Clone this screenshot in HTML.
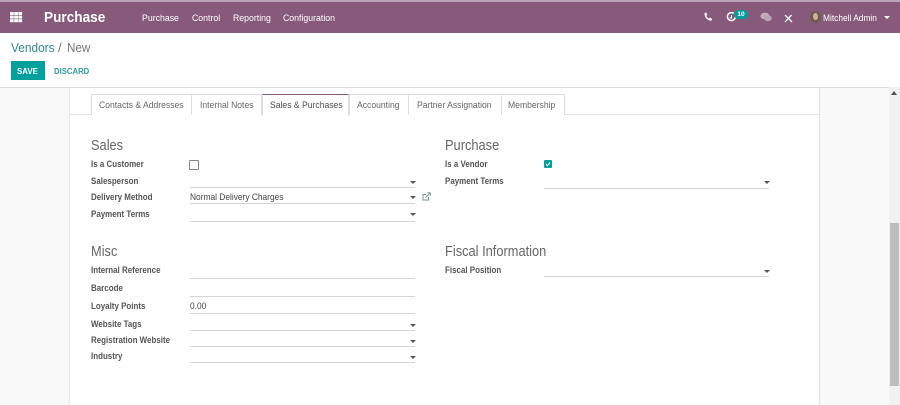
<!DOCTYPE html>
<html><head><meta charset="utf-8"><style>
html,body{margin:0;padding:0;width:900px;height:405px;overflow:hidden;background:#fff}
body{font-family:"Liberation Sans",sans-serif;position:relative;color:#4c4c4c}
#w{position:absolute;left:0;top:0;width:900px;height:405px;overflow:hidden;filter:blur(.3px)}
.a,.t,.l,.h,.u,.c{position:absolute;white-space:nowrap}
.t{font-size:9.5px;line-height:14px;color:#666;top:99px;transform:scaleX(.905);transform-origin:0 0}
.l{font-size:9px;font-weight:bold;color:#555;line-height:12px;transform:scaleX(.885);transform-origin:0 0}
.h{font-size:14.5px;color:#666;line-height:18px;transform:scaleX(.885);transform-origin:0 0;margin-top:1px}
.v{transform:scaleX(.9);transform-origin:0 0}
.u{height:1px;background:#d4d4d4}
.c{width:0;height:0;border-left:3px solid transparent;border-right:3px solid transparent;border-top:3px solid #555}
.n{position:absolute;top:12px;font-size:9.3px;line-height:13px;color:#fff;white-space:nowrap;transform:scaleX(.94);transform-origin:0 0}
.tab{position:absolute;top:94px;height:21px;border:1px solid #ddd;border-bottom:none;box-sizing:border-box;background:#fff}
</style></head><body><div id="w">
<div class="a" style="left:0;top:0;width:900px;height:2px;background:#b9a6b5"></div>
<div class="a" style="left:0;top:2px;width:900px;height:31px;background:#875a7b"></div>
<svg class="a" style="left:10px;top:12px" width="13" height="11"><g fill="#fff"><rect x="0" y="0" width="3.7" height="3"/><rect x="4.2" y="0" width="3.7" height="3"/><rect x="8.4" y="0" width="3.7" height="3"/><rect x="0" y="3.6" width="3.7" height="3"/><rect x="4.2" y="3.6" width="3.7" height="3"/><rect x="8.4" y="3.6" width="3.7" height="3"/><rect x="0" y="7.2" width="3.7" height="3"/><rect x="4.2" y="7.2" width="3.7" height="3"/><rect x="8.4" y="7.2" width="3.7" height="3"/></g></svg>
<div class="a" style="left:44px;top:9px;font-size:14.8px;line-height:18px;font-weight:bold;color:#fff;transform:scaleX(.92);transform-origin:0 0">Purchase</div>
<div class="n" style="left:142px">Purchase</div>
<div class="n" style="left:192px">Control</div>
<div class="n" style="left:233px">Reporting</div>
<div class="n" style="left:283px">Configuration</div>
<svg class="a" style="left:703px;top:12px" width="10" height="10" viewBox="0 0 10 10"><path d="M1.5 1 L3.3 .6 L4.3 2.9 L3.2 3.9 C3.7 5 4.6 6 5.8 6.6 L7 5.6 L9 6.7 L8.6 8.6 C4.8 9 1.2 5.3 1.5 1Z" fill="#fff"/></svg>
<svg class="a" style="left:726px;top:12px" width="11" height="11" viewBox="0 0 11 11"><path d="M7.8 1.4 A4 4 0 1 0 9.4 4.4" fill="none" stroke="#fff" stroke-width="1.5"/><path d="M5.5 3 V6 H3.6" fill="none" stroke="#fff" stroke-width="1"/></svg>
<div class="a" style="left:734px;top:10px;width:14px;height:9px;border-radius:5px;background:#00a09d;color:#fff;font-size:6.5px;font-weight:bold;line-height:9px;text-align:center">10</div>
<svg class="a" style="left:760px;top:12px" width="13" height="11" viewBox="0 0 13 11"><ellipse cx="5" cy="4" rx="4.6" ry="3.4" fill="#c3adbd"/><ellipse cx="8" cy="6.2" rx="3.8" ry="3" fill="#b9a3b4"/></svg>
<svg class="a" style="left:784px;top:14px" width="9" height="9" viewBox="0 0 9 9"><path d="M1 1 L8 8 M7.5 1 L1 8" stroke="#fff" stroke-width="1.3" fill="none"/></svg>
<div class="a" style="left:810px;top:11px;width:11px;height:12px;border-radius:50%;background:#6f5b4e"></div>
<div class="a" style="left:813px;top:13px;width:5px;height:7px;border-radius:50%;background:#d0b09a"></div>
<div class="n" style="left:823px;transform:scaleX(.9)">Mitchell Admin</div>
<div class="c" style="left:884px;top:16px;border-top-color:#fff"></div>

<div class="a" style="left:11px;top:40px;font-size:13.2px;line-height:16px;color:#2f8a8b;transform:scaleX(.9);transform-origin:0 0">Vendors</div>
<div class="a" style="left:58px;top:40px;font-size:13.2px;line-height:16px;color:#777">/</div>
<div class="a" style="left:67px;top:40px;font-size:13.2px;line-height:16px;color:#777;transform:scaleX(.88);transform-origin:0 0">New</div>
<div class="a" style="left:11px;top:61px;width:34px;height:19px;background:#00a09d"></div>
<div class="a" style="left:17px;top:65px;font-size:8.6px;font-weight:bold;line-height:12px;color:#fff;transform:scaleX(.92);transform-origin:0 0">SAVE</div>
<div class="a" style="left:54px;top:65px;font-size:8.6px;font-weight:bold;line-height:12px;color:#2f9c9d;transform:scaleX(.9);transform-origin:0 0">DISCARD</div>

<div class="a" style="left:0;top:87px;width:900px;height:318px;background:#f9f9f9"></div>
<div class="a" style="left:0;top:87px;width:890px;height:1px;background:#dcdcdc"></div>
<div class="a" style="left:69px;top:88px;width:749px;height:317px;background:#fff;border-left:1px solid #e8e8e8;border-right:1px solid #e2e2e2"></div>
<div class="a" style="left:70px;top:114px;width:749px;height:1px;background:#e0e0e0"></div>

<div class="tab" style="left:91px;width:101px"></div>
<div class="tab" style="left:191px;width:71px"></div>
<div class="tab" style="left:349px;width:60px"></div>
<div class="tab" style="left:408px;width:94px"></div>
<div class="tab" style="left:501px;width:64px"></div>
<div class="tab" style="left:262px;width:87px;height:22px;border-color:#ddd;border-top-color:#875a7b"></div>
<div class="t" style="left:99px">Contacts &amp; Addresses</div>
<div class="t" style="left:200px">Internal Notes</div>
<div class="t" style="left:270px;color:#4c4c4c">Sales &amp; Purchases</div>
<div class="t" style="left:357px">Accounting</div>
<div class="t" style="left:417px">Partner Assignation</div>
<div class="t" style="left:508px">Membership</div>

<div class="h" style="left:90.5px;top:136px">Sales</div>
<div class="h" style="left:444.5px;top:136px">Purchase</div>
<div class="h" style="left:90.5px;top:242px">Misc</div>
<div class="h" style="left:444.5px;top:242px">Fiscal Information</div>

<div class="l" style="left:90.5px;top:158px">Is a Customer</div>
<div class="a" style="left:189px;top:160px;width:8px;height:8px;border:1px solid #888;border-radius:1px;background:#fff"></div>
<div class="l" style="left:90.5px;top:175px">Salesperson</div>
<div class="u" style="left:190px;top:187px;width:225px"></div><div class="c" style="left:410px;top:181px"></div>
<div class="l" style="left:90.5px;top:191px">Delivery Method</div>
<div class="a v" style="left:189.5px;top:191px;font-size:9.3px;line-height:13px;color:#444">Normal Delivery Charges</div>
<div class="u" style="left:190px;top:203px;width:225px"></div><div class="c" style="left:410px;top:196px"></div>
<svg class="a" style="left:422px;top:192px" width="9" height="9" viewBox="0 0 9 9"><path d="M6.5 5 V8 H1 V2.5 H4" fill="none" stroke="#6f8f90" stroke-width=".9"/><path d="M3.5 5.5 L8 1 M5.3 .8 H8.2 V3.7" fill="none" stroke="#6f8f90" stroke-width=".9"/></svg>
<div class="l" style="left:90.5px;top:208px">Payment Terms</div>
<div class="u" style="left:190px;top:221px;width:225px"></div><div class="c" style="left:410px;top:213px"></div>

<div class="l" style="left:444.5px;top:158px">Is a Vendor</div>
<div class="a" style="left:544px;top:160px;width:8px;height:8px;background:#00a09d;border-radius:1px"></div>
<svg class="a" style="left:544px;top:160px" width="8" height="8" viewBox="0 0 8 8"><path d="M2 4.2 L3.4 5.6 L6 2.6" fill="none" stroke="#fff" stroke-width="1.1"/></svg>
<div class="l" style="left:444.5px;top:175px">Payment Terms</div>
<div class="u" style="left:544px;top:188px;width:225px"></div><div class="c" style="left:764px;top:181px"></div>

<div class="l" style="left:90.5px;top:264px">Internal Reference</div>
<div class="u" style="left:190px;top:278px;width:225px"></div>
<div class="l" style="left:90.5px;top:282px">Barcode</div>
<div class="u" style="left:190px;top:296px;width:225px"></div>
<div class="l" style="left:90.5px;top:300px">Loyalty Points</div>
<div class="a v" style="left:189.5px;top:300px;font-size:9.3px;line-height:13px;color:#444">0.00</div>
<div class="u" style="left:190px;top:313px;width:225px"></div>
<div class="l" style="left:90.5px;top:318px">Website Tags</div>
<div class="u" style="left:190px;top:330px;width:225px"></div><div class="c" style="left:410px;top:324px"></div>
<div class="l" style="left:90.5px;top:334px">Registration Website</div>
<div class="u" style="left:190px;top:346px;width:225px"></div><div class="c" style="left:410px;top:340px"></div>
<div class="l" style="left:90.5px;top:350px">Industry</div>
<div class="u" style="left:190px;top:362px;width:225px"></div><div class="c" style="left:410px;top:356px"></div>

<div class="l" style="left:444.5px;top:264px">Fiscal Position</div>
<div class="u" style="left:544px;top:276px;width:225px"></div><div class="c" style="left:764px;top:270px"></div>

<div class="a" style="left:889px;top:87px;width:11px;height:318px;background:#f1f1f1"></div>
<div class="a" style="left:890px;top:223px;width:9px;height:163px;background:#bdbdbd"></div>
<div class="a" style="left:891px;top:91px;width:0;height:0;border-left:3px solid transparent;border-right:3px solid transparent;border-bottom:4px solid #505050"></div>
</div></body></html>
